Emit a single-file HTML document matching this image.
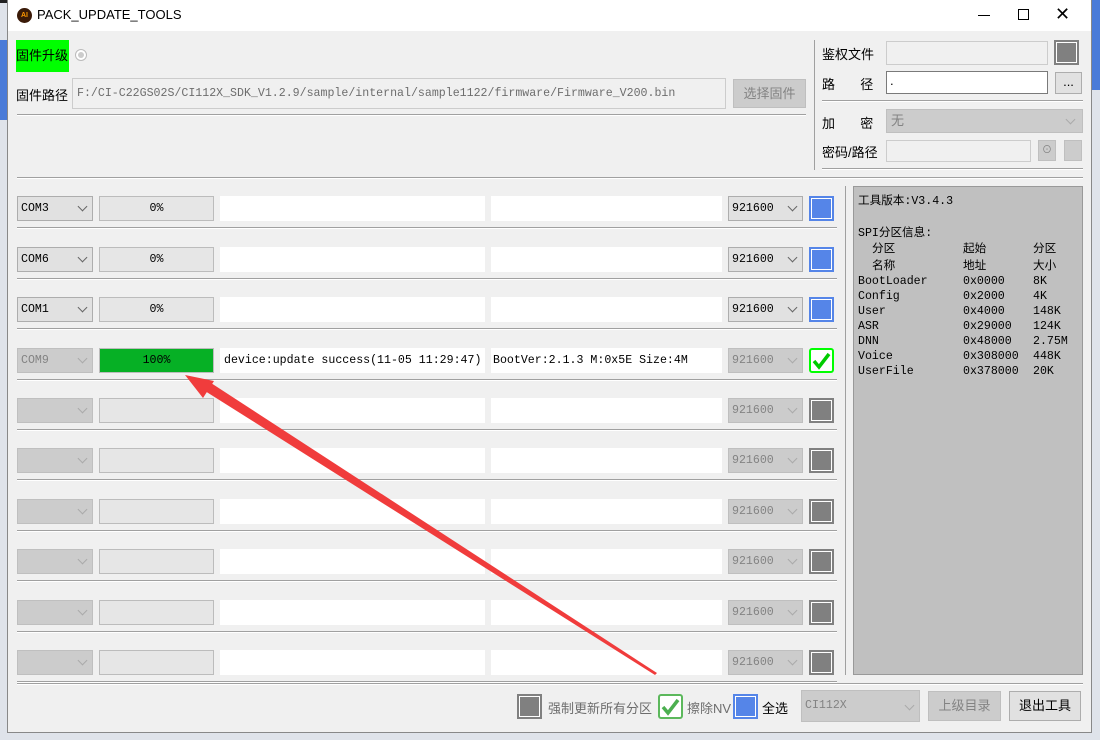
<!DOCTYPE html>
<html><head><meta charset="utf-8"><style>
*{margin:0;padding:0;box-sizing:border-box}
body{width:1100px;height:740px;position:relative;overflow:hidden;background:#dfe3ea;font-family:"Liberation Sans","Noto Sans CJK SC",sans-serif;font-size:13px;color:#000}
.a{position:absolute}
.win{left:7px;top:0;width:1085px;height:733px;background:#f0f0f0;border:1px solid #888;border-top:none}
.title{left:8px;top:0;width:1083px;height:31px;background:#fff}
.mono{font-family:"Liberation Mono","Noto Sans CJK SC",monospace;font-size:11.6px}
.cb{background:#e1e1e1;border:1px solid #adadad}
.cbd{background:#cccccc;border:1px solid #bfbfbf;color:#838383}
.pb{background:#e6e6e6;border:1px solid #bcbcbc;text-align:center;line-height:23px}
.wt{background:#fff}
.hl{height:2px;background:#a0a0a0;border-bottom:1px solid #fff}
.chev{position:absolute;right:6px;top:6px;width:7px;height:7px;border-right:1px solid #666;border-bottom:1px solid #666;transform:rotate(45deg)}
.cbd .chev{border-color:#aaa}
.bchk{width:25px;height:25px;background:#5585e8;border:2px solid #5585e8;box-shadow:inset 0 0 0 1px #fff}
.gchk{width:25px;height:25px;background:#808080;border:2px solid #808080;box-shadow:inset 0 0 0 1px #fff}
.btn{background:#e1e1e1;border:1px solid #adadad;text-align:center}
.ip{position:absolute;font-family:"Liberation Mono","Noto Sans CJK SC",monospace;font-size:11.6px;white-space:nowrap}
</style></head><body>
<div class="a" style="left:0;top:0;width:1100px;height:3px;background:#222"></div>
<div class="a" style="left:0;top:40px;width:7px;height:80px;background:#4a7bd8"></div>
<div class="a" style="left:1092px;top:0;width:8px;height:90px;background:#4a7bd8"></div>
<div class="a win"></div>
<div class="a title"></div>
<div class="a" style="left:17px;top:8px;width:15px;height:15px;border-radius:50%;background:#3a1a08;color:#f90;font-size:7px;text-align:center;line-height:15px;font-weight:bold">AI</div>
<div class="a" style="left:37px;top:7px;font-size:13px">PACK_UPDATE_TOOLS</div>
<div class="a" style="left:978px;top:15px;width:12px;height:1px;background:#000"></div>
<div class="a" style="left:1018px;top:9px;width:11px;height:11px;border:1px solid #000"></div>
<div class="a" style="left:1055px;top:4px;font-size:18px;font-weight:200">✕</div>

<div class="a" style="left:16px;top:40px;width:53px;height:32px;background:#00ff00;line-height:32px;font-size:13px">固件升级</div>
<div class="a" style="left:75px;top:49px;width:12px;height:12px;border-radius:50%;border:1px solid #bbb;background:#fff"><div class="a" style="left:2px;top:2px;width:6px;height:6px;border-radius:50%;background:#ccc"></div></div>
<div class="a" style="left:16px;top:85px">固件路径</div>
<div class="a mono" style="left:72px;top:78px;width:654px;height:31px;border:1px solid #ccc;background:#f0f0f0;color:#6d6d6d;line-height:29px;padding-left:4px">F:/CI-C22GS02S/CI112X_SDK_V1.2.9/sample/internal/sample1122/firmware/Firmware_V200.bin</div>
<div class="a btn" style="left:733px;top:79px;width:73px;height:29px;line-height:27px;background:#ccc;border-color:#bfbfbf;color:#838383">选择固件</div>
<div class="a hl" style="left:17px;top:114px;width:789px"></div>

<div class="a" style="left:814px;top:40px;width:1px;height:130px;background:#a0a0a0"></div>
<div class="a" style="left:822px;top:44px">鉴权文件</div>
<div class="a" style="left:886px;top:41px;width:162px;height:24px;border:1px solid #ccc"></div>
<div class="a gchk" style="left:1054px;top:40px;width:25px;height:25px"></div>
<div class="a" style="left:822px;top:74px">路&nbsp;&nbsp;&nbsp;&nbsp;&nbsp;&nbsp;&nbsp;径</div>
<div class="a wt" style="left:886px;top:71px;width:162px;height:23px;border:1px solid #7a7a7a;padding-left:3px;line-height:18px">.</div>
<div class="a btn" style="left:1055px;top:72px;width:27px;height:22px;line-height:18px">...</div>
<div class="a hl" style="left:822px;top:100px;width:261px"></div>
<div class="a" style="left:822px;top:113px">加&nbsp;&nbsp;&nbsp;&nbsp;&nbsp;&nbsp;&nbsp;密</div>
<div class="a cbd" style="left:886px;top:109px;width:197px;height:24px;padding-left:4px;line-height:22px">无<span class="chev" style="right:8px"></span></div>
<div class="a" style="left:822px;top:142px">密码/路径</div>
<div class="a" style="left:886px;top:140px;width:145px;height:22px;border:1px solid #ccc"></div>
<div class="a cbd" style="left:1038px;top:140px;width:18px;height:21px;text-align:center;font-size:10px;line-height:19px">⊙</div>
<div class="a cbd" style="left:1064px;top:140px;width:18px;height:21px"></div>
<div class="a hl" style="left:822px;top:168px;width:261px"></div>
<div class="a hl" style="left:17px;top:177px;width:1066px"></div>

<div class="a" style="left:845px;top:186px;width:1px;height:489px;background:#a0a0a0"></div>
<div class="a" style="left:853px;top:186px;width:230px;height:489px;background:#c0c0c0;border:1px solid #999"></div>
<div id="info"></div>

<div id="rows"></div>
<script>
var ih='';
function ip(x,y,t){ih+='<div class="ip" style="left:'+x+'px;top:'+y+'px">'+t+'</div>';}
ip(858,192,'工具版本:V3.4.3');
ip(858,224,'SPI分区信息:');
ip(872,240,'分区');ip(963,240,'起始');ip(1033,240,'分区');
ip(872,257,'名称');ip(963,257,'地址');ip(1033,257,'大小');
var d=[['BootLoader','0x0000','8K'],['Config','0x2000','4K'],['User','0x4000','148K'],['ASR','0x29000','124K'],['DNN','0x48000','2.75M'],['Voice','0x308000','448K'],['UserFile','0x378000','20K']];
d.forEach(function(r,i){var y=275+i*15;ip(858,y,r[0]);ip(963,y,r[1]);ip(1033,y,r[2]);});
document.getElementById('info').innerHTML=ih;
var tops=[196,247,297,348,398,448,499,549,600,650];
var h='';
tops.forEach(function(t,i){
 var act=i<3, done=i==3;
 var com=['COM3','COM6','COM1','COM9'][i]||'';
 h+='<div class="a mono '+(act?'cb':'cbd')+'" style="left:17px;top:'+t+'px;width:76px;height:25px;padding-left:3px;line-height:23px">'+com+'<span class="chev"></span></div>';
 if(done) h+='<div class="a mono pb" style="left:99px;top:'+t+'px;width:115px;height:25px;background:#06b025">100%</div>';
 else h+='<div class="a mono pb" style="left:99px;top:'+t+'px;width:115px;height:25px">'+(act?'0%':'')+'</div>';
 h+='<div class="a wt mono" style="left:220px;top:'+t+'px;width:265px;height:25px;line-height:25px;padding-left:4px;white-space:nowrap;overflow:hidden">'+(done?'device:update success(11-05 11:29:47)':'')+'</div>';
 h+='<div class="a wt mono" style="left:491px;top:'+t+'px;width:231px;height:25px;line-height:25px;padding-left:2px;white-space:nowrap">'+(done?'BootVer:2.1.3 M:0x5E Size:4M':'')+'</div>';
 h+='<div class="a mono '+(act?'cb':'cbd')+'" style="left:728px;top:'+t+'px;width:75px;height:25px;padding-left:3px;line-height:23px">921600<span class="chev"></span></div>';
 if(act) h+='<div class="a bchk" style="left:809px;top:'+t+'px"></div>';
 else if(done) h+='<div class="a" style="left:809px;top:'+t+'px;width:25px;height:25px;border:2px solid #0f0;border-radius:3px;background:#fff"><svg width="21" height="21" class="a" style="left:0;top:0"><path d="M3 11 L8 17 L18 4" stroke="#0c0" stroke-width="3.5" fill="none"/></svg></div>';
 else h+='<div class="a gchk" style="left:809px;top:'+t+'px"></div>';
 h+='<div class="a hl" style="left:17px;top:'+(t+31)+'px;width:820px"></div>';
});
document.getElementById('rows').innerHTML=h;
</script>
<div class="a hl" style="left:17px;top:683px;width:1066px"></div>

<div class="a gchk" style="left:517px;top:694px"></div>
<div class="a" style="left:548px;top:698px;color:#6d6d6d">强制更新所有分区</div>
<div class="a" style="left:658px;top:694px;width:25px;height:25px;border:2px solid #5cb85c;border-radius:3px;background:#fff"><svg width="21" height="21" class="a" style="left:0;top:0"><path d="M3 11 L8 17 L18 4" stroke="#4caf50" stroke-width="3.5" fill="none"/></svg></div>
<div class="a" style="left:687px;top:698px;color:#6d6d6d">擦除NV</div>
<div class="a bchk" style="left:733px;top:694px"></div>
<div class="a" style="left:762px;top:698px">全选</div>
<div class="a mono cbd" style="left:801px;top:690px;width:119px;height:32px;padding-left:3px;line-height:30px">CI112X<span class="chev" style="top:11px"></span></div>
<div class="a btn" style="left:928px;top:691px;width:73px;height:30px;line-height:28px;background:#ccc;border-color:#bfbfbf;color:#838383">上级目录</div>
<div class="a btn" style="left:1009px;top:691px;width:72px;height:30px;line-height:28px">退出工具</div>

<svg class="a" style="left:0;top:0" width="1100" height="740">
<polygon points="657,673 655,675 205,391 211,383" fill="#f03c3c"/>
<polygon points="185,375 214,381 203,398" fill="#f03c3c"/>
</svg>
</body></html>
